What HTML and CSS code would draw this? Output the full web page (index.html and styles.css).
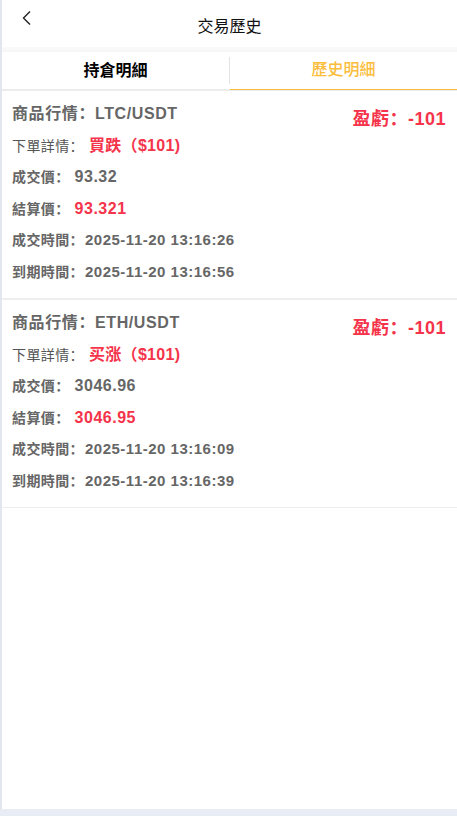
FILE: index.html
```html
<!DOCTYPE html>
<html>
<head>
<meta charset="utf-8">
<link rel="stylesheet" href="styles.css">
</head>
<body>
<div class="app">
  <div class="header">
    <svg class="back" width="12" height="16" viewBox="0 0 12 16"><path d="M9 1.5 L2.5 8 L9 14.5" fill="none" stroke="#222" stroke-width="1.4"/></svg>
    <div class="title">交易歷史</div>
  </div>
  <div class="band"></div>
  <div class="tabs">
    <div class="tab">持倉明細</div>
    <div class="sep"></div>
    <div class="tab active">歷史明細</div>
  </div>
  <div class="card first">
    <div class="rows">
      <div class="row big">商品行情：LTC/USDT</div>
      <div class="row"><span class="lbl light">下單詳情：</span><span class="order red">買跌（$101)</span></div>
      <div class="row"><span class="lbl">成交價：</span><span class="val">93.32</span></div>
      <div class="row"><span class="lbl">結算價：</span><span class="val red">93.321</span></div>
      <div class="row"><span class="lbl">成交時間：</span><span class="date">2025-11-20 13:16:26</span></div>
      <div class="row"><span class="lbl">到期時間：</span><span class="date">2025-11-20 13:16:56</span></div>
    </div>
    <div class="profit">盈虧：-101</div>
  </div>
  <div class="card second">
    <div class="rows">
      <div class="row big">商品行情：ETH/USDT</div>
      <div class="row"><span class="lbl light">下單詳情：</span><span class="order red">买涨（$101)</span></div>
      <div class="row"><span class="lbl">成交價：</span><span class="val">3046.96</span></div>
      <div class="row"><span class="lbl">結算價：</span><span class="val red">3046.95</span></div>
      <div class="row"><span class="lbl">成交時間：</span><span class="date">2025-11-20 13:16:09</span></div>
      <div class="row"><span class="lbl">到期時間：</span><span class="date">2025-11-20 13:16:39</span></div>
    </div>
    <div class="profit">盈虧：-101</div>
  </div>
  <div class="fill"></div>
</div>
<div class="bottom"></div>
</body>
</html>
```
FILE: styles.css
```css
html, body {
  margin: 0;
  padding: 0;
  height: 816px;
  overflow: hidden;
  background: #fff;
  font-family: "Liberation Sans", "Noto Sans CJK SC", sans-serif;
}
body {
  display: flex;
  flex-direction: column;
}
.app {
  flex: 1;
  display: flex;
  flex-direction: column;
  border-left: 2px solid #e2e6ef;
  background: #fff;
}
.header {
  height: 47px;
  position: relative;
  display: flex;
  align-items: center;
  justify-content: center;
}
.back {
  position: absolute;
  left: 19px;
  top: 10px;
}
.title {
  font-size: 16px;
  color: #111;
  margin-top: 2px;
}
.band {
  height: 5px;
  background: linear-gradient(#fafafa, #f6f6f6);
}
.tabs {
  height: 37px;
  display: flex;
  align-items: center;
  border-bottom: 2px solid #ececec;
}
.tab {
  flex: 1;
  text-align: center;
  font-size: 16px;
  font-weight: 700;
  color: #000;
  height: 37px;
  line-height: 37px;
  box-sizing: border-box;
}
.tab.active {
  color: #fbbd3b;
  font-weight: 500;
  border-bottom: 1px solid #fbbd3b;
  margin-bottom: -1px;
  height: 38px;
  line-height: 36px;
}
.sep {
  width: 1px;
  height: 27px;
  background: #e4e4e4;
}
.card {
  display: flex;
  justify-content: space-between;
  padding: 7px 11px 11px 10px;
}
.card.first { border-bottom: 2px solid #eeeeee; }
.card.second { border-bottom: 1px solid #eeeeee; }
.row {
  line-height: 31.5px;
  height: 31.5px;
  font-size: 14px;
  letter-spacing: 0.4px;
  color: #666;
  font-weight: 700;
  white-space: nowrap;
}
.row.big {
  font-size: 16px;
  letter-spacing: 0.6px;
  color: #666;
}
.lbl { color: #666; }
.lbl.light { font-weight: 400; color: #555; }
.order { font-size: 16px; letter-spacing: 0.3px; margin-left: 5px; }
.val { font-size: 16px; letter-spacing: 0.5px; margin-left: 5px; }
.red { color: #f5334a; }
.row .red { font-weight: 700; }
.date { color: #666; font-size: 15px; letter-spacing: 0.5px; margin-left: 1px; }
.profit {
  font-size: 18px;
  letter-spacing: 0.5px;
  font-weight: 700;
  color: #f5334a;
  margin-top: 9px;
  line-height: 24px;
  height: 24px;
  white-space: nowrap;
}
.fill { flex: 1; }
.bottom {
  height: 7px;
  background: #e8ecf4;
}
```
